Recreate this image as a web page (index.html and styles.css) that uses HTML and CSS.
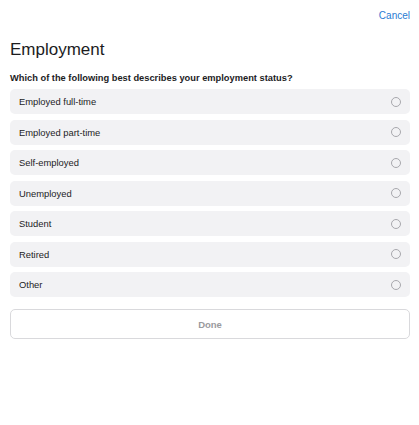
FILE: index.html
```html
<!DOCTYPE html>
<html>
<head>
<meta charset="utf-8">
<link rel="stylesheet" href="styles.css">
</head>
<body>
<div class="page">
  <div class="topbar"><a class="cancel">Cancel</a></div>
  <h1 class="title">Employment</h1>
  <p class="question">Which of the following best describes your employment status?</p>
  <div class="options">
    <div class="option"><span>Employed full-time</span><span class="radio"></span></div>
    <div class="option"><span>Employed part-time</span><span class="radio"></span></div>
    <div class="option"><span>Self-employed</span><span class="radio"></span></div>
    <div class="option"><span>Unemployed</span><span class="radio"></span></div>
    <div class="option"><span>Student</span><span class="radio"></span></div>
    <div class="option"><span>Retired</span><span class="radio"></span></div>
    <div class="option"><span>Other</span><span class="radio"></span></div>
  </div>
  <button class="done">Done</button>
</div>
</body>
</html>
```
FILE: styles.css
```css
html, body {
  margin: 0;
  padding: 0;
  background: #fff;
}
body {
  font-family: "Liberation Sans", Arial, sans-serif;
  color: #1c1c1e;
}
.page {
  padding: 0 9px 0 10px;
  display: flex;
  flex-direction: column;
}
.topbar {
  display: flex;
  justify-content: flex-end;
  padding-top: 10px;
  height: 12px;
}
.cancel {
  font-size: 10px;
  color: #2a7bd3;
  line-height: 12px;
}
.title {
  margin: 0;
  margin-top: 17px;
  font-size: 17px;
  font-weight: normal;
  line-height: 22px;
}
.question {
  margin: 0;
  margin-top: 11px;
  font-size: 9.3px;
  font-weight: bold;
  line-height: 12px;
}
.options {
  margin-top: 5px;
  display: flex;
  flex-direction: column;
  gap: 5.5px;
}
.option {
  height: 25px;
  background: #f2f2f4;
  border-radius: 5px;
  display: flex;
  align-items: center;
  justify-content: space-between;
  padding: 0 9px;
  font-size: 9.4px;
}
.radio {
  width: 8px;
  height: 8px;
  border: 1px solid #a8a8ad;
  border-radius: 50%;
}
.done {
  margin-top: 12px;
  height: 30px;
  border: 1px solid #d9d9dc;
  border-radius: 5px;
  background: #fff;
  font-family: "Liberation Sans", Arial, sans-serif;
  font-size: 9.5px;
  font-weight: bold;
  color: #9a9a9e;
}
```
